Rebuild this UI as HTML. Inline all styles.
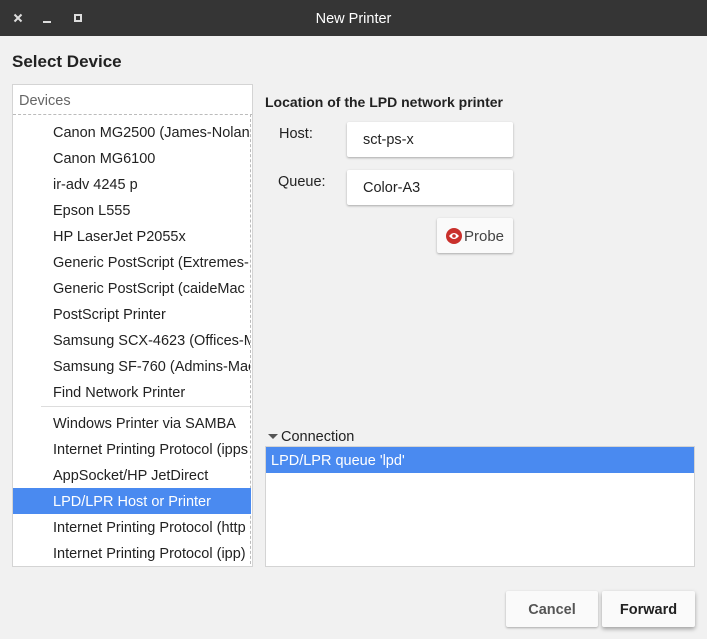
<!DOCTYPE html>
<html><head><style>
*{box-sizing:border-box;margin:0;padding:0}
body{width:707px;height:639px;background:#f1f1f1;font-family:"Liberation Sans",sans-serif;font-size:14.5px;color:#222;position:relative;overflow:hidden}
.a{position:absolute}
.tb{left:0;top:0;width:707px;height:36px;background:#353535;color:#fff}
.ent{background:#fff;border-radius:2px;box-shadow:0 1px 2px rgba(0,0,0,.3);padding-left:16px;line-height:37px;font-size:14.5px;color:#222}
.btn{background:#fafafa;border-radius:2px;box-shadow:0 1px 2px rgba(0,0,0,.3);text-align:center;line-height:38px;font-size:14.5px;font-weight:bold}
.it{left:41px;width:197px;height:26px;line-height:28px;white-space:nowrap;overflow:hidden;font-size:14.5px;color:#222}
</style></head><body>
<div class="a tb">
 <svg class="a" style="left:13px;top:13px" width="10" height="10" viewBox="0 0 10 10"><path d="M1.5 1.5L8.5 8.5M8.5 1.5L1.5 8.5" stroke="#ddd" stroke-width="2"/></svg>
 <div class="a" style="left:43px;top:21px;width:8px;height:2px;background:#ddd"></div>
 <div class="a" style="left:74px;top:14px;width:8px;height:8px;border:2px solid #ddd"></div>
 <div class="a" style="left:0;width:707px;top:11px;text-align:center;font-size:14.5px;color:#fff">New Printer</div>
</div>
<div class="a" style="left:12px;top:52px;font-size:17px;font-weight:bold;color:#222">Select Device</div>
<div class="a" style="left:12px;top:84px;width:241px;height:483px;background:#fff;border:1px solid #d4d4d4;overflow:hidden">
 <div class="a" style="left:6px;top:8px;color:#666;font-size:14.5px">Devices</div>
 <div class="a" style="left:0;top:29px;width:240px;border-top:1px dashed #bbb"></div>
 <div class="a" style="left:237px;top:29px;height:460px;border-left:1px dashed #bbb"></div>
 <div class="a" style="left:28px;top:321px;width:209px;border-top:1px solid #ddd"></div>
 <div class="a" style="left:0;top:403px;width:238px;height:26px;background:#4a8af0"></div>
</div>
<div class="a it" style="left:53px;top:119px">Canon MG2500 (James-Nolan-</div>
<div class="a it" style="left:53px;top:145px">Canon MG6100</div>
<div class="a it" style="left:53px;top:171px">ir-adv 4245 p</div>
<div class="a it" style="left:53px;top:197px">Epson L555</div>
<div class="a it" style="left:53px;top:223px">HP LaserJet P2055x</div>
<div class="a it" style="left:53px;top:249px">Generic PostScript (Extremes-</div>
<div class="a it" style="left:53px;top:275px">Generic PostScript (caideMac</div>
<div class="a it" style="left:53px;top:301px">PostScript Printer</div>
<div class="a it" style="left:53px;top:327px">Samsung SCX-4623 (Offices-M</div>
<div class="a it" style="left:53px;top:353px">Samsung SF-760 (Admins-Mac</div>
<div class="a it" style="left:53px;top:379px">Find Network Printer</div>
<div class="a it" style="left:53px;top:410px">Windows Printer via SAMBA</div>
<div class="a it" style="left:53px;top:436px">Internet Printing Protocol (ipps</div>
<div class="a it" style="left:53px;top:462px">AppSocket/HP JetDirect</div>
<div class="a it" style="left:53px;top:488px;color:#fff">LPD/LPR Host or Printer</div>
<div class="a it" style="left:53px;top:514px">Internet Printing Protocol (http</div>
<div class="a it" style="left:53px;top:540px">Internet Printing Protocol (ipp)</div>

<div class="a" style="left:265px;top:94px;font-weight:bold;font-size:14px">Location of the LPD network printer</div>
<div class="a" style="left:279px;top:126px">Host:</div>
<div class="a ent" style="left:347px;top:122px;width:166px;height:35px">sct-ps-x</div>
<div class="a" style="left:278px;top:174px">Queue:</div>
<div class="a ent" style="left:347px;top:170px;width:166px;height:35px">Color-A3</div>
<div class="a btn" style="left:437px;top:218px;width:76px;height:35px;font-weight:normal;color:#444;line-height:38px;padding-left:18px;font-size:15px">Probe
 <svg class="a" style="left:9px;top:10px" width="16" height="16" viewBox="0 0 16 16"><circle cx="8" cy="8" r="8" fill="#c9302c"/><path d="M3 8q5-6 10 0q-5 6-10 0z" fill="#fff"/><circle cx="8" cy="8" r="1.8" fill="#c9302c"/></svg>
</div>
<div class="a" style="left:268px;top:434px;width:0;height:0;border-left:5px solid transparent;border-right:5px solid transparent;border-top:5px solid #555"></div>
<div class="a" style="left:281px;top:429px">Connection</div>
<div class="a" style="left:265px;top:446px;width:430px;height:121px;background:#fff;border:1px solid #d4d4d4">
 <div style="background:#4a8af0;color:#fff;height:26px;line-height:28px;padding-left:5px">LPD/LPR queue 'lpd'</div>
</div>
<div class="a btn" style="left:506px;top:591px;width:92px;height:36px;color:#555">Cancel</div>
<div class="a btn" style="left:602px;top:591px;width:93px;height:36px;color:#222;box-shadow:0 2px 4px rgba(0,0,0,.35)">Forward</div>
</body></html>
